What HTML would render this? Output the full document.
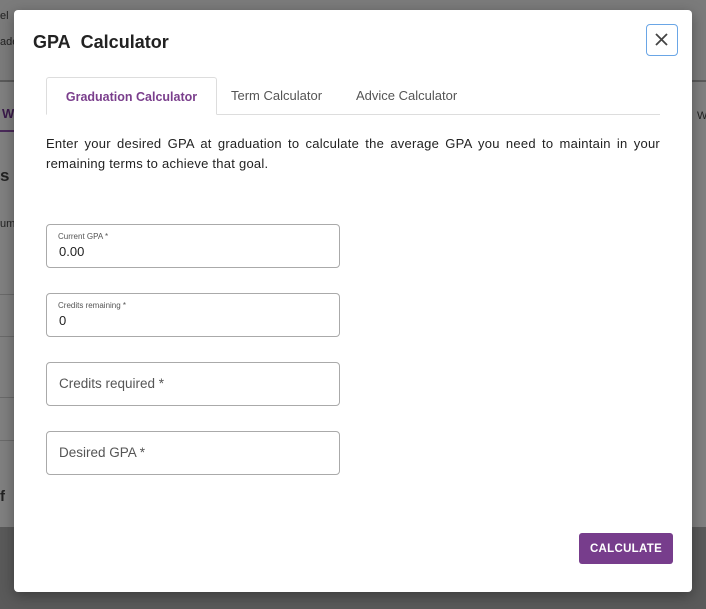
<!DOCTYPE html>
<html><head><style>
body{margin:0;width:706px;height:609px;position:relative;overflow:hidden;font-family:"Liberation Sans",sans-serif;background:#5a5a5a}
.bg1{position:absolute;left:0;top:0;width:706px;height:80px;background:#7b7b7b}
.bg2{position:absolute;left:0;top:82px;width:706px;height:445px;background:#808080}
.bgt{position:absolute;font-size:11px;color:#222}
.line{position:absolute;left:0;width:14px;height:1px;background:#6a6a6a}
.modal{position:absolute;left:14px;top:10px;width:678px;height:582px;background:#fff;border-radius:4px;box-shadow:0 4px 14px rgba(0,0,0,.35)}
h1{position:absolute;left:19px;top:22px;margin:0;font-size:18px;font-weight:bold;color:#222}
.close{position:absolute;left:632px;top:14px;width:32px;height:32px;border:1.5px solid #6aa6e6;border-radius:4px;box-sizing:border-box}
.tabs{position:absolute;left:32px;top:67px;width:614px;height:37px;border-bottom:1px solid #ddd}
.tab{position:absolute;top:0;height:37px;line-height:38px;font-size:13px;color:#555}
.tab.a{left:0;width:171px;border:1px solid #ddd;border-bottom:1px solid #fff;border-radius:3px 3px 0 0;text-align:center;color:#7a3e8c;font-weight:bold;box-sizing:border-box;height:38px;font-size:12.5px}
p{position:absolute;left:32px;top:124px;width:614px;margin:0;font-size:13px;line-height:20px;color:#222;text-align:justify;letter-spacing:0.25px}
.f{position:absolute;left:32px;width:292px;height:42px;border:1px solid #aaa;border-radius:4px}
.f .l{position:absolute;left:11px;top:7px;font-size:8px;color:#555}
.f .v{position:absolute;left:12px;top:19px;font-size:13px;color:#222}
.f .p{position:absolute;left:12px;top:13px;font-size:13.5px;color:#555}
.btn{position:absolute;left:565px;top:523px;width:94px;height:31px;background:#773d8c;border-radius:3px;color:#fff;font-size:11.5px;font-weight:bold;display:flex;align-items:center;justify-content:center;letter-spacing:.3px}
</style></head><body>
<div class="bg1"></div><div class="bg2"></div>
<div class="bgt" style="left:0;top:10px">el</div>
<div class="bgt" style="left:0;top:36px">ade</div>
<div class="bgt" style="left:2px;top:106px;color:#3a1a4a;font-weight:bold;font-size:13px">W</div>
<div style="position:absolute;left:0;top:130px;width:14px;height:2px;background:#4a2a5a"></div>
<div class="bgt" style="left:0;top:166px;font-weight:bold;font-size:17px">s</div>
<div class="bgt" style="left:0;top:218px">um</div>
<div class="line" style="top:294px"></div><div class="line" style="top:336px"></div><div class="line" style="top:397px"></div><div class="line" style="top:440px"></div>
<div class="bgt" style="left:0;top:488px;font-weight:bold;font-size:15px">f</div>
<div class="bgt" style="left:697px;top:110px">W</div>
<div class="modal">
<h1>GPA&nbsp; Calculator</h1>
<div class="close"><svg width="29" height="29" viewBox="0 0 29 29"><path d="M9 9L20 20M20 9L9 20" stroke="#444" stroke-width="1.8"/></svg></div>
<div class="tabs">
<div class="tab a">Graduation Calculator</div>
<div class="tab" style="left:185px">Term Calculator</div>
<div class="tab" style="left:310px">Advice Calculator</div>
</div>
<p>Enter your desired GPA at graduation to calculate the average GPA you need to maintain in your remaining terms to achieve that goal.</p>
<div class="f" style="top:214px"><div class="l">Current GPA *</div><div class="v">0.00</div></div>
<div class="f" style="top:283px"><div class="l">Credits remaining *</div><div class="v">0</div></div>
<div class="f" style="top:352px"><div class="p">Credits required *</div></div>
<div class="f" style="top:421px"><div class="p">Desired GPA *</div></div>
<div class="btn">CALCULATE</div>
</div>
</body></html>
